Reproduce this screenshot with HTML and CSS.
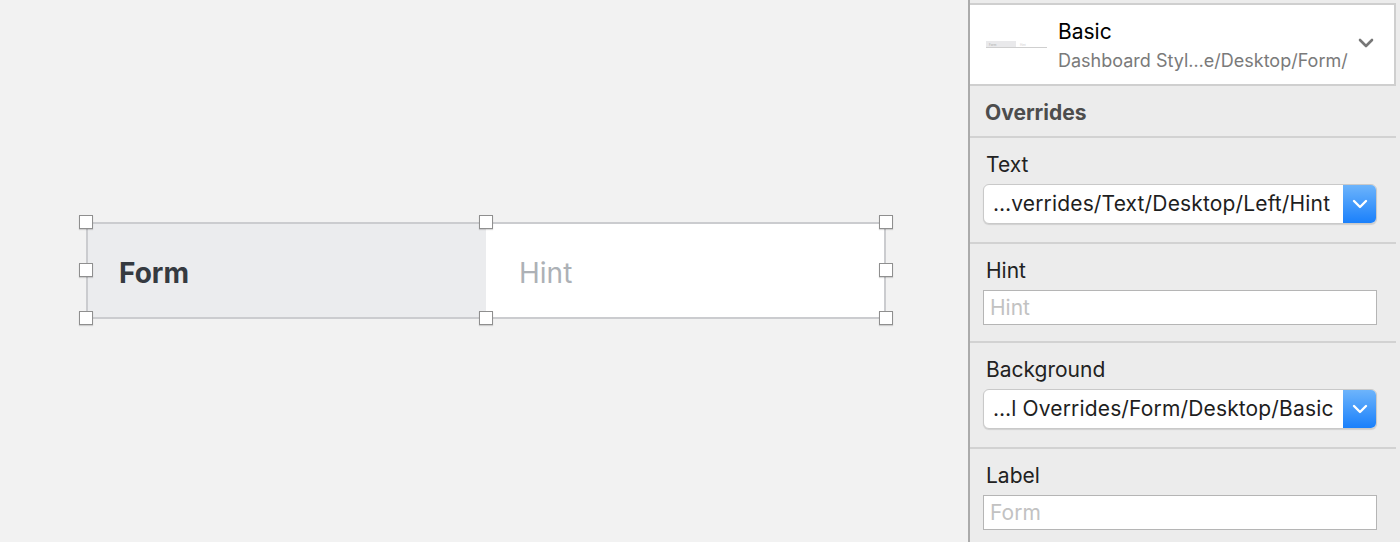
FILE: index.html
```html
<!DOCTYPE html>
<html>
<head>
<meta charset="utf-8">
<link rel="stylesheet" href="styles.css">
</head>
<body>
<div class="app">
  <main class="canvas">
    <div class="component">
      <div class="half half-label">Form</div>
      <div class="half half-hint">Hint</div>
      <span class="handle h-tl"></span>
      <span class="handle h-tm"></span>
      <span class="handle h-tr"></span>
      <span class="handle h-ml"></span>
      <span class="handle h-mr"></span>
      <span class="handle h-bl"></span>
      <span class="handle h-bm"></span>
      <span class="handle h-br"></span>
    </div>
  </main>
  <aside class="panel">
    <div class="symbol-card">
      <div class="thumb">
        <div class="thumb-left">Form</div>
        <div class="thumb-right">Hint</div>
      </div>
      <div class="symbol-info">
        <div class="symbol-name">Basic</div>
        <div class="symbol-path">Dashboard Styl…e/Desktop/Form/</div>
      </div>
      <svg class="symbol-chevron" width="16" height="10" viewBox="0 0 16 10"><path d="M2 2 L8 8 L14 2" fill="none" stroke="#777" stroke-width="2.6" stroke-linecap="round" stroke-linejoin="round"/></svg>
    </div>
    <div class="overrides-title">Overrides</div>
    <section class="field field-select">
      <div class="field-label">Text</div>
      <div class="select">
        <span class="select-value">…verrides/Text/Desktop/Left/Hint</span>
        <span class="select-btn"><svg width="16" height="10" viewBox="0 0 16 10"><path d="M2 2 L8 8 L14 2" fill="none" stroke="#fff" stroke-width="2.4" stroke-linecap="round" stroke-linejoin="round"/></svg></span>
      </div>
    </section>
    <section class="field field-input">
      <div class="field-label">Hint</div>
      <div class="input"><span class="placeholder">Hint</span></div>
    </section>
    <section class="field field-select">
      <div class="field-label">Background</div>
      <div class="select">
        <span class="select-value">…l Overrides/Form/Desktop/Basic</span>
        <span class="select-btn"><svg width="16" height="10" viewBox="0 0 16 10"><path d="M2 2 L8 8 L14 2" fill="none" stroke="#fff" stroke-width="2.4" stroke-linecap="round" stroke-linejoin="round"/></svg></span>
      </div>
    </section>
    <section class="field field-input last">
      <div class="field-label">Label</div>
      <div class="input"><span class="placeholder">Form</span></div>
    </section>
  </aside>
</div>
</body>
</html>
```

FILE: styles.css
```css
* { box-sizing: border-box; }
html, body { margin: 0; padding: 0; }
body {
  width: 1400px;
  height: 542px;
  overflow: hidden;
  background: #f2f2f2;
  font-family: Inter, "Liberation Sans", sans-serif;
}
.app {
  display: flex;
  height: 542px;
}
.canvas {
  flex: 1;
  background: #f2f2f2;
  padding: 222px 0 0 86px;
}
.component {
  position: relative;
  display: flex;
  width: 800px;
  height: 97px;
  border: 2px solid #cbcccf;
}
.half {
  width: 50%;
  display: flex;
  align-items: center;
  padding-left: 31px;
  padding-top: 4px;
  font-size: 28px;
}
.half-label {
  background: #ebecee;
  color: #353a40;
  font-weight: 700;
}
.half-hint {
  background: #fff;
  color: #adb1b6;
  font-weight: 400;
  padding-left: 33px;
}
.handle {
  position: absolute;
  width: 14px;
  height: 14px;
  background: #fff;
  border: 1px solid #8f8f8f;
  box-shadow: 0 1px 1px rgba(0,0,0,0.15);
}
.h-tl { left: -9px; top: -9px; }
.h-tm { left: 391px; top: -9px; }
.h-tr { left: 791px; top: -9px; }
.h-ml { left: -9px; top: 39px; }
.h-mr { left: 791px; top: 39px; }
.h-bl { left: -9px; top: 87px; }
.h-bm { left: 391px; top: 87px; }
.h-br { left: 791px; top: 87px; }

.panel {
  width: 432px;
  height: 542px;
  background: #ececec;
  border-left: 2px solid #ababab;
  padding-top: 3px;
}
.symbol-card {
  height: 83px;
  margin-right: 4px;
  background: #fff;
  border: 2px solid #cfcfcf;
  border-left: none;
  display: flex;
  align-items: center;
}
.thumb {
  display: flex;
  width: 61px;
  height: 7px;
  margin-left: 16px;
  margin-right: 11px;
  border-bottom: 1px solid #cfcfcf;
  font-size: 3px;
  color: #aaa;
}
.thumb-left {
  width: 30px;
  background: #e9e9eb;
  padding: 2px 0 0 3px;
}
.thumb-right {
  flex: 1;
  background: #fff;
  padding: 2px 0 0 4px;
  color: #ccc;
}
.symbol-info {
  flex: 1;
  padding-top: 4px;
}
.symbol-name {
  font-size: 21px;
  line-height: 26px;
  color: #000;
}
.symbol-path {
  font-size: 18px;
  line-height: 26px;
  color: #7a7a7a;
  margin-top: 3px;
}
.symbol-chevron {
  margin-right: 20px;
  margin-bottom: 4px;
}
.overrides-title {
  height: 52px;
  margin-right: 4px;
  border-bottom: 2px solid #d2d2d2;
  padding-left: 15px;
  font-size: 21px;
  font-weight: 700;
  color: #4d4d4d;
  line-height: 54px;
}
.field {
  margin-right: 4px;
  padding: 15px 0 0 13px;
  border-bottom: 2px solid #d2d2d2;
}
.field-select { height: 106px; }
.field-input { height: 99px; }
.field.last { border-bottom: none; }
.field-label {
  font-size: 21px;
  line-height: 24px;
  color: #222;
  padding-left: 3px;
}
.field-select .select { margin-top: 7px; }
.select {
  width: 394px;
  height: 40px;
  display: flex;
  background: #fff;
  border: 1px solid #c9c9c9;
  border-radius: 6px;
  box-shadow: 0 1px 1px rgba(0,0,0,0.12);
  overflow: hidden;
}
.select-value {
  flex: 1;
  padding-left: 9px;
  font-size: 21px;
  letter-spacing: 0.15px;
  line-height: 38px;
  color: #1e1e1e;
  white-space: nowrap;
}
.select-btn {
  width: 33px;
  display: flex;
  align-items: center;
  justify-content: center;
  background: linear-gradient(#6db4fb, #1a80fb);
}
.input {
  margin-top: 7px;
  width: 394px;
  height: 35px;
  background: #fff;
  border: 1px solid #b5b5b5;
  padding-left: 6px;
}
.placeholder {
  font-size: 21px;
  line-height: 33px;
  color: #c2c2c2;
}
```
